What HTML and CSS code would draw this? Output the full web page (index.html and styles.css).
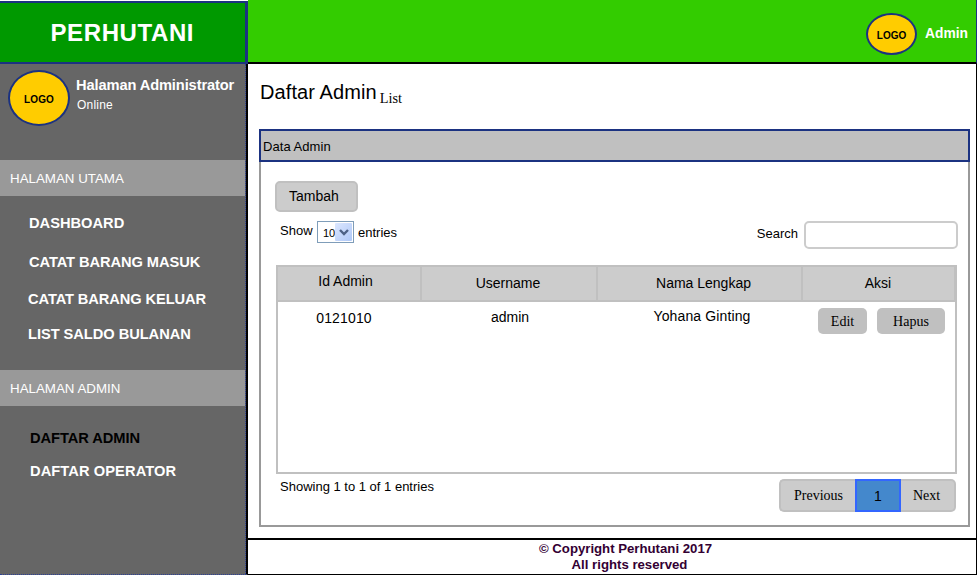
FILE: index.html
```html
<!DOCTYPE html>
<html lang="id">
<head>
<meta charset="utf-8">
<title>Perhutani</title>
<link rel="stylesheet" href="styles.css">
</head>
<body>
<div class="app">
  <aside class="sidebar">
    <div class="brand"><span>PERHUTANI</span></div>
    <div class="side-body">
      <div class="profile">
        <div class="logo logo-large">LOGO</div>
        <div class="profile-text">
          <div class="profile-name">Halaman Administrator</div>
          <div class="profile-status">Online</div>
        </div>
      </div>
      <h2 class="section">HALAMAN UTAMA</h2>
      <nav class="menu menu-main">
        <a class="item-dashboard">DASHBOARD</a>
        <a class="item-in">CATAT BARANG MASUK</a>
        <a class="item-out">CATAT BARANG KELUAR</a>
        <a class="item-saldo">LIST SALDO BULANAN</a>
      </nav>
      <h2 class="section">HALAMAN ADMIN</h2>
      <nav class="menu menu-admin">
        <a class="item-admin active">DAFTAR ADMIN</a>
        <a class="item-operator">DAFTAR OPERATOR</a>
      </nav>
    </div>
  </aside>
  <div class="content">
    <header class="topbar">
      <div class="logo logo-small">LOGO</div>
      <span class="user">Admin</span>
    </header>
    <main class="page">
      <h1 class="title">Daftar Admin</h1><span class="subtitle">List</span>
      <section class="panel">
        <div class="panel-head">Data Admin</div>
        <div class="panel-body">
          <button class="add"><span>Tambah</span></button>
          <div class="tools">
            <span class="show">Show</span>
            <span class="select"><span class="select-value">10</span><span class="select-arrow"><svg width="10" height="7" viewBox="0 0 10 7"><path d="M1 1 L5 5 L9 1" fill="none" stroke="#4d6185" stroke-width="2.4"/></svg></span></span>
            <span class="entries">entries</span>
            <span class="search-label">Search</span>
            <input class="search" type="text">
          </div>
          <div class="table">
            <div class="row head">
              <div class="h-id"><span>Id Admin</span></div><div class="h-user"><span>Username</span></div><div class="h-name"><span>Nama Lengkap</span></div><div class="h-action"><span>Aksi</span></div>
            </div>
            <div class="row data">
              <div class="d-id"><span>0121010</span></div><div class="d-user"><span>admin</span></div><div class="d-name"><span>Yohana Ginting</span></div>
              <div class="actions"><button class="edit">Edit</button><button class="delete">Hapus</button></div>
            </div>
          </div>
          <div class="bottom">
            <span class="showing">Showing 1 to 1 of 1 entries</span>
            <div class="pager"><button class="prev">Previous</button><button class="current">1</button><button class="next">Next</button></div>
          </div>
        </div>
      </section>
    </main>
    <footer class="footer"><div class="copy">© Copyright Perhutani 2017</div><div class="rights">All rights reserved</div></footer>
  </div>
</div>
</body>
</html>
```
FILE: styles.css
```css
* { box-sizing: border-box; }
body { margin: 0; background: #fff; color: #000; font-family: "Liberation Sans", Arial, sans-serif; font-size: 13px; overflow: hidden; }
h1, h2 { margin: 0; font-weight: normal; }
button { margin: 0; padding: 0; color: #000; font-family: "Liberation Serif", "Times New Roman", serif; font-size: 14px; }
.app { display: flex; width: 977px; height: 575px; }

.sidebar { width: 248px; padding-top: 1px; display: flex; flex-direction: column; }
.brand { height: 63px; border: 2px solid #1b3281; border-left: 0; border-right-width: 3px; background: #009900; color: #fff; font-size: 24px; font-weight: bold; letter-spacing: .6px; line-height: 59px; padding-left: 50.5px; }
.side-body { flex: 1; background: #666; border-right: 2px solid #000; border-bottom: 1px dotted #2b3f95; position: relative; }
.side-body::after { content: ""; position: absolute; top: 0; bottom: 0; right: 0; border-right: 1px dotted #2b3f95; }
.profile { height: 96px; padding: 6px 0 0 8px; display: flex; gap: 6px; color: #fff; }
.logo { border: 2px solid #1b3281; border-radius: 50%; background: #ffcc00; color: #000; font-weight: bold; text-align: center; flex: none; }
.logo-large { width: 62px; height: 56px; font-size: 10px; line-height: 55px; letter-spacing: .1px; }
.profile-name { font-size: 14.67px; font-weight: bold; line-height: 18px; letter-spacing: -.12px; margin-top: 6px; white-space: nowrap; }
.profile-status { font-size: 12px; line-height: 16px; letter-spacing: .2px; margin: 3px 0 0 1px; }
.section { height: 36px; width: 245px; padding-left: 10px; background: #999; color: #fff; font-size: 13.33px; line-height: 37px; }
.menu { display: flex; flex-direction: column; color: #fff; font-size: 14.67px; font-weight: bold; line-height: 18px; }
.menu-main { height: 174px; padding: 18px 0 0 29px; }
.item-in { margin-top: 21px; letter-spacing: -.08px; }
.item-out { margin: 19px 0 0 -1px; letter-spacing: -.1px; }
.item-saldo { margin: 17px 0 0 -1px; letter-spacing: -.05px; }
.menu-admin { padding: 23px 0 0 30px; }
.item-admin { letter-spacing: -.06px; }
.item-operator { margin-top: 15px; letter-spacing: .08px; }
.active { color: #000; }

.content { flex: 1; display: flex; flex-direction: column; border-right: 1px solid #000; border-bottom: 1px solid #000; }
.topbar { height: 64px; margin-right: -1px; background: #33cc00; border-bottom: 2px solid #000; border-right: 1px solid #1b3281; display: flex; align-items: flex-start; justify-content: flex-end; padding: 13px 8px 0 0; }
.logo-small { width: 51px; height: 42px; font-size: 10px; line-height: 41px; }
.user { margin-left: 8px; margin-top: 12px; color: #fff; font-size: 13.8px; line-height: 18px; font-weight: bold; }
.page { height: 474px; padding: 0 6px 0 11px; }
.title { display: inline-block; height: 65px; padding: 16px 0 0 1px; font-size: 20px; line-height: 24px; letter-spacing: .1px; }
.subtitle { font-family: "Liberation Serif", "Times New Roman", serif; font-size: 14.3px; margin-left: 3px; position: relative; top: 4px; }
.panel { height: 398px; display: flex; flex-direction: column; }
.panel-head { height: 33px; border: 2px solid #1b3281; background: #c0c0c0; line-height: 31px; padding-left: 2px; letter-spacing: .05px; }
.panel-body { flex: 1; border: 2px solid #999; border-top: 0; padding: 19px 11px 0 14px; }
.add { display: block; width: 83px; height: 31px; border: 2px solid #c0c0c0; border-radius: 5px; background: #ccc; font-family: "Liberation Sans", Arial, sans-serif; font-size: 14px; text-align: left; padding: 0 0 2px 12px; }
.tools { display: flex; height: 53px; padding: 9px 0 0 5px; align-items: flex-start; line-height: 16px; margin-right: -1px; }
.show { width: 37px; margin-top: 2px; }
.select { width: 37px; height: 22px; border: 1px solid #7f9db9; display: flex; justify-content: space-between; padding: 1px; font-size: 11px; }
.select-value { padding: 2px 0 0 4px; }
.select-arrow { width: 17px; height: 18px; border-radius: 1px; background: linear-gradient(135deg, #dce7ff, #afc8f7); display: flex; align-items: center; justify-content: center; }
.entries { margin: 4px 0 0 4px; }
.search-label { margin: 5px 6px 0 auto; }
.search { width: 154px; height: 28px; border: 2px solid #ccc; border-radius: 5px; outline: 0; padding: 0 6px; background: #fff; }
.table { width: 681px; height: 209px; margin-left: 1px; border: 2px solid #c0c0c0; }
.row { display: grid; grid-template-columns: 144px 176px 205px 1fr; font-size: 14px; line-height: 16px; text-align: center; }
.head { height: 35px; background: #ccc; border-bottom: 2px solid #c0c0c0; }
.head > div { border-right: 2px solid #c0c0c0; padding-top: 8px; }
.head > .h-id { padding: 6px 7px 0 0; }
.head > .h-user { padding-right: 2px; }
.head > .h-name { padding-left: 8px; }
.head > .h-action { border-right-width: 1px; padding-right: 1px; }
.data .d-id { padding: 8px 12px 0 0; letter-spacing: .15px; }
.data .d-user { padding: 7px 0 0 0; }
.data .d-name { padding: 6px 0 0 3px; letter-spacing: .13px; }
.actions { display: flex; gap: 10px; padding: 6px 0 0 15px; }
.actions button { height: 26px; border: 0; border-radius: 5px; background: #c0c0c0; padding-top: 1px; }
.edit { width: 49px; }
.delete { width: 68px; }
.bottom { display: flex; justify-content: space-between; padding: 5px 1px 0 5px; }
.pager { display: flex; height: 33px; }
.pager button { border: 2px solid #c0c0c0; background: #ccc; }
.pager .prev { width: 76px; border-right: 0; border-radius: 5px 0 0 5px; padding-left: 1px; }
.pager .current { width: 46px; border: 2px solid #3366ff; background: #4488cc; font-family: "Liberation Sans", Arial, sans-serif; }
.pager .next { width: 55px; border-left: 0; border-radius: 0 5px 5px 0; padding-right: 2px; }
.footer { flex: 1; border-top: 2px solid #000; color: #330033; font-size: 13.2px; font-weight: bold; line-height: 16px; text-align: center; padding: 1px 0 0 27px; }
.rights { padding-left: 8px; }
```
